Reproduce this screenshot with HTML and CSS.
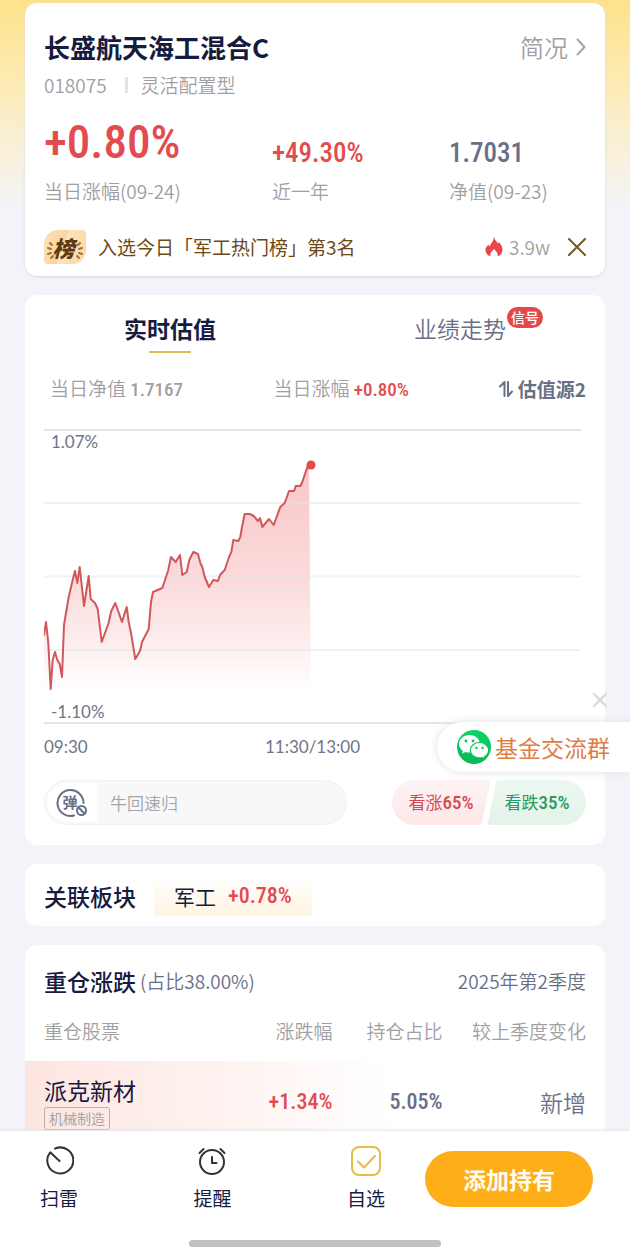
FILE: index.html
```html
<!DOCTYPE html>
<html lang="zh-CN">
<head>
<meta charset="utf-8">
<meta name="viewport" content="width=device-width, initial-scale=1">
<title>长盛航天海工混合C</title>
<link rel="stylesheet" href="styles.css">
</head>
<body>
<div class="app">
  <main class="content">
    <section class="card summary">
      <header class="summary-head">
        <h1 class="fund-name">长盛航天海工混合C</h1>
        <a class="profile-link" href="#profile">简况
          <svg class="chevron" viewBox="0 0 10 18" aria-hidden="true"><path d="M1.500 1.500 8.500 9l-7 7.500"/></svg>
        </a>
      </header>
      <p class="fund-meta"><span>018075</span><i class="divider"></i><span>灵活配置型</span></p>
      <dl class="stats">
        <div class="stat"><dd class="num num-xl up">+0.80%</dd><dt>当日涨幅(09-24)</dt></div>
        <div class="stat"><dd class="num num-lg up">+49.30%</dd><dt>近一年</dt></div>
        <div class="stat"><dd class="num num-lg slate">1.7031</dd><dt>净值(09-23)</dt></div>
      </dl>
      <div class="notice">
        <span class="rank-icon">
          <svg viewBox="0 0 42 34" aria-hidden="true">
            <path class="rank-ray" d="M6 13l2 2M4 18l3 1M4 24l3-1M7 28l2-2M36 13l-2 2M38 18l-3 1M38 24l-3-1M35 28l-2-2"/>
          </svg>
          <b>榜</b>
        </span>
        <a class="notice-text" href="#rank">入选今日「军工热门榜」第3名</a>
        <span class="heat">
          <svg class="flame" viewBox="0 0 18 20" aria-hidden="true"><path d="M9 0c1 3 2 4 4 6.500l1-1.500c2 2.500 3.500 5 3.500 8 0 3-2 5.500-5 6.500 1-3-1-5-3.500-7.500-2.500 2.500-4.500 4.500-3.500 7.500-3-1-5-3.500-5-6.500 0-2.500 1.500-4 3-5.500 0 1 .5 1.500 1 2C6 6.500 8.500 4 9 0z"/></svg>
          3.9w
        </span>
        <button class="icon-button" type="button" aria-label="关闭">
          <svg class="close-brown" viewBox="0 0 18 18"><path d="M1 1l16 16M17 1 1 17"/></svg>
        </button>
      </div>
    </section>

    <section class="card valuation">
      <nav class="tabs">
        <button class="tab active" type="button"><span class="tab-label">实时估值</span></button>
        <button class="tab" type="button"><span class="tab-label">业绩走势<span class="badge">信号</span></span></button>
      </nav>
      <div class="metrics">
        <span>当日净值 <b class="num num-sm">1.7167</b></span>
        <span>当日涨幅 <b class="num num-sm up">+0.80%</b></span>
        <button class="source" type="button">
          <svg viewBox="0 0 14 18" aria-hidden="true"><path d="M1 6.500 5.500 2v14M9 2v14l4-4.500"/></svg>估值源2
        </button>
      </div>
      <figure class="chart">
        <svg viewBox="0 0 537 295" role="img" aria-label="实时估值走势">
          <defs>
            <linearGradient id="area" x1="0" y1="36" x2="0" y2="260" gradientUnits="userSpaceOnUse">
              <stop offset="0" stop-color="#f9c6c8"/><stop offset=".5" stop-color="#fbdadb"/><stop offset=".8" stop-color="#fdeeee"/><stop offset="1" stop-color="#fff"/>
            </linearGradient>
          </defs>
          <path class="area" d="M0 206 2 193 4.300 214 6.700 260 8.700 231 11 223 13.300 231 15.700 235 18 248 20 196 24.700 168 28.700 151 31 142 33.300 154 35.700 138 40 177 44.700 147 46.700 170 51 174 53.700 180 57.700 213 64.300 195 67.300 182 71.300 174 78 193 82.700 178 84.700 193 87 204 91.300 230 96 222 98 213 104.700 200 107 173 109 163 118.300 159 124 142 127 128 131.700 133 136 126 138.300 146 142.700 143 145.300 131 149.300 123 154 125 156.300 134 158.300 138 160.700 148 165 158 169.300 151 174 152 176 146 180.700 141 185 128 187.300 123 189.300 111 194.300 112 196.300 108 198 98 200.700 85 206 85 209.700 87 214 92 216 89 218.300 98 225 90 229.700 96 236.300 78 240.700 74 245 62 250 62 251.700 57 256.300 57 258.300 53 264 36 265 36 267 260 0 260z"/>
          <path class="grid" d="M0 74h537M0 147.500h537M0 221h537"/>
          <path class="frame" d="M0 1h537M0 294h537"/>
          <path class="line" d="M0 206 2 193 4.300 214 6.700 260 8.700 231 11 223 13.300 231 15.700 235 18 248 20 196 24.700 168 28.700 151 31 142 33.300 154 35.700 138 40 177 44.700 147 46.700 170 51 174 53.700 180 57.700 213 64.300 195 67.300 182 71.300 174 78 193 82.700 178 84.700 193 87 204 91.300 230 96 222 98 213 104.700 200 107 173 109 163 118.300 159 124 142 127 128 131.700 133 136 126 138.300 146 142.700 143 145.300 131 149.300 123 154 125 156.300 134 158.300 138 160.700 148 165 158 169.300 151 174 152 176 146 180.700 141 185 128 187.300 123 189.300 111 194.300 112 196.300 108 198 98 200.700 85 206 85 209.700 87 214 92 216 89 218.300 98 225 90 229.700 96 236.300 78 240.700 74 245 62 250 62 251.700 57 256.300 57 258.300 53 264 36"/>
          <circle cx="267" cy="36" r="4.500" fill="#e9474b"/>
        </svg>
        <span class="axis y-max">1.07%</span>
        <span class="axis y-min">-1.10%</span>
      </figure>
      <div class="axis x-axis"><span>09:30</span><span>11:30/13:00</span><span></span></div>
      <div class="interact">
        <div class="danmaku">
          <button class="danmaku-toggle" type="button" aria-label="弹幕开关">
            <svg viewBox="0 0 32 30" aria-hidden="true">
              <path d="M27.500 15A13 13 0 1 0 18 27.500"/>
              <circle cx="25.500" cy="22.500" r="4.500"/><path d="M22.500 19.500l6 6"/>
            </svg>
            <b>弹</b>
          </button>
          <input class="danmaku-input" type="text" placeholder="牛回速归" aria-label="弹幕">
        </div>
        <div class="votes">
          <button class="vote vote-up" type="button">
            <svg class="vote-shape" viewBox="0 0 98 45" preserveAspectRatio="none" aria-hidden="true">
              <defs><linearGradient id="voteUp" x1="0" y1="0" x2="0" y2="1"><stop offset="0" stop-color="#fef3f3"/><stop offset="1" stop-color="#fde7e8"/></linearGradient></defs>
              <path fill="url(#voteUp)" d="M22.500 0H96q2.500 0 2 2.500L90 42q-.5 3-3 3H22.500a22.500 22.500 0 0 1 0-45z"/>
            </svg>
            <span>看涨<b class="num num-sm">65%</b></span>
          </button>
          <button class="vote vote-down" type="button">
            <svg class="vote-shape" viewBox="0 0 98 45" preserveAspectRatio="none" aria-hidden="true">
              <defs><linearGradient id="voteDown" x1="0" y1="0" x2="0" y2="1"><stop offset="0" stop-color="#edf7f1"/><stop offset="1" stop-color="#e3f3e8"/></linearGradient></defs>
              <path fill="url(#voteDown)" d="M75.500 45H2q-2.500 0-2-2.500L8 3q.5-3 3-3h64.500a22.500 22.500 0 0 1 0 45z"/>
            </svg>
            <span>看跌<b class="num num-sm">35%</b></span>
          </button>
        </div>
      </div>
    </section>

    <section class="card sector">
      <h2 class="section-title">关联板块</h2>
      <a class="sector-tag" href="#sector">军工 <b class="num num-md up">+0.78%</b></a>
    </section>

    <section class="card holdings">
      <header class="holdings-head">
        <h2 class="section-title">重仓涨跌</h2>
        <span class="ratio">(占比38.00%)</span>
        <span class="quarter">2025年第2季度</span>
      </header>
      <table class="holdings-table">
        <thead><tr><th class="col-name">重仓股票</th><th class="col-change">涨跌幅</th><th class="col-share">持仓占比</th><th class="col-diff">较上季度变化</th></tr></thead>
        <tbody><tr>
          <td><span class="stock">派克新材</span><span class="industry">机械制造</span></td>
          <td class="num num-md up">+1.34%</td>
          <td class="num num-md slate">5.05%</td>
          <td class="diff slate">新增</td>
        </tr></tbody>
      </table>
    </section>
  </main>

  <aside class="group">
    <button class="icon-button" type="button" aria-label="收起">
      <svg class="close-grey" viewBox="0 0 14 14"><path d="M1 1l12 12M13 1 1 13"/></svg>
    </button>
    <a class="group-link" href="#group">
      <svg class="wechat" viewBox="0 0 34 34" aria-hidden="true">
        <defs><linearGradient id="wx" x1="0" y1="0" x2="0" y2="1"><stop offset="0" stop-color="#0cd568"/><stop offset="1" stop-color="#08b855"/></linearGradient></defs>
        <circle cx="17" cy="17" r="17" fill="url(#wx)"/>
        <path fill="#fff" d="M12.500 5C6.500 5 2 9 2 14c0 2.800 1.500 5.200 3.800 6.800l-.8 2.700 3.300-1.600c1.300.4 2.700.6 4.200.6C18.500 22.500 23 18.800 23 14S18.500 5 12.500 5z"/>
        <path fill="#fff" stroke="#0ac660" stroke-width="1.200" d="M22.500 12.500c-5 0-9.200 3.300-9.200 7.700s4.200 7.700 9.200 7.700c1 0 2-.1 3-.4l2.800 1.500-.7-2.400c2.500-1.500 4-3.800 4-6.400 0-4.400-4-7.700-9.100-7.700z"/>
        <g fill="#0ac660"><circle cx="9" cy="11" r="1.400"/><circle cx="16" cy="11" r="1.400"/><circle cx="19.500" cy="18" r="1.200"/><circle cx="25.500" cy="18" r="1.200"/></g>
      </svg>
      基金交流群
    </a>
  </aside>

  <footer class="bottom-bar">
    <div class="actions">
      <nav class="tools">
        <button class="tool" type="button">
          <svg viewBox="0 0 30 30" aria-hidden="true"><path d="M11 2.600A13 13 0 1 1 6.200 6.300L15.500 15"/></svg>扫雷
        </button>
        <button class="tool" type="button">
          <svg viewBox="0 0 30 30" aria-hidden="true"><circle cx="15" cy="16" r="12"/><path d="M15 11v6h4.500M2.500 7l4-4M27.500 7l-4-4"/></svg>提醒
        </button>
        <button class="tool" type="button">
          <svg class="checked" viewBox="0 0 30 30" aria-hidden="true"><rect x="1" y="1" width="28" height="28" rx="7"/><path d="M7 15.500l6 6L24 10"/></svg>自选
        </button>
      </nav>
      <button class="add-button" type="button">添加持有</button>
    </div>
    <div class="home-indicator"></div>
  </footer>
</div>
</body>
</html>
```
FILE: styles.css
```css
* { box-sizing: border-box; }
body {
  margin: 0;
  font-family: "Noto Sans CJK SC", sans-serif;
  font-weight: 350;
  font-size: 19px;
  line-height: 28px;
  color: #9fa0a3;
}
h1, h2, p, dl, dd, figure { margin: 0; }
button {
  border: 0;
  padding: 0;
  background: none;
  font: inherit;
  color: inherit;
  cursor: pointer;
}
a { color: inherit; text-decoration: none; }
svg { display: block; fill: none; stroke-linecap: round; stroke-linejoin: round; }

.app {
  position: relative;
  display: flex;
  flex-direction: column;
  height: 100vh;
  overflow: hidden;
  background: linear-gradient(#fee28a 0, #fdecb8 90px, #f3f4fa 210px);
}
.content {
  flex: 1;
  min-height: 0;
  overflow: hidden;
  display: flex;
  flex-direction: column;
  gap: 19px;
  padding: 3px 25px 0;
}
.card {
  flex: none;
  padding: 0 19px;
  border-radius: 12px;
  background: #fff;
}

.num { font-family: "Roboto Condensed", "Roboto", sans-serif; font-weight: 500; }
.num-xl { font-size: 47px; line-height: 56px; }
.num-lg { font-size: 27px; line-height: 36px; }
.num-md { font-size: 22px; line-height: 28px; }
.num-sm { font-size: 19px; line-height: 28px; }
.up { color: #e24c4f; }
.slate { color: #686f86; }

/* Fund summary */
.summary { padding-top: 26px; padding-bottom: 12px; box-shadow: 0 1px 3px #d9dae2; }
.summary-head { display: flex; justify-content: space-between; align-items: center; }
.fund-name { font-size: 26px; line-height: 36px; font-weight: 700; color: #161b40; }
.profile-link { display: flex; align-items: center; gap: 8px; font-size: 24px; line-height: 36px; }
.chevron { width: 10px; height: 18px; stroke: #a3a4a7; stroke-width: 2; }
.fund-meta { display: flex; align-items: center; margin-top: 6px; }
.divider { width: 3px; height: 16px; margin: 0 13px 0 18px; background: #e3e3e3; }
.stats { display: grid; grid-template-columns: 228fr 177fr 137fr; margin-top: 15px; }
.stat { display: flex; flex-direction: column; justify-content: flex-end; gap: 7px; }
.stat .num-lg { margin-bottom: -1px; }
.notice { display: flex; align-items: center; margin-top: 25px; height: 34px; }
.rank-icon {
  display: grid;
  width: 42px;
  height: 34px;
  border-radius: 14px 4px 14px 4px;
  background: linear-gradient(110deg, #fde3bd, #fbd49f 45%, #fde2bc 46%, #fbd7a6);
}
.rank-icon > * { grid-area: 1 / 1; }
.rank-icon b { place-self: center; margin-right: 3px; font-size: 22px; line-height: 28px; font-weight: 900; font-style: italic; color: #5d3a12; }
.rank-ray { stroke: #a5712e; stroke-width: 2; }
.notice-text { flex: 1; margin-left: 12px; color: #6b4a17; font-weight: 400; }
.heat { display: flex; align-items: center; gap: 6px; margin-right: 18px; }
.flame { width: 18px; height: 20px; fill: #e9474b; }
.close-brown { width: 18px; height: 18px; stroke: #765526; stroke-width: 2; }

/* Real-time valuation */
.valuation { padding-top: 14px; padding-bottom: 20px; }
.tabs { display: grid; grid-template-columns: 1fr 1fr; margin: 0 -19px; }
.tab { display: flex; flex-direction: column; align-items: center; font-size: 23px; line-height: 38px; color: #686f86; }
.tab-label { position: relative; }
.tab.active { font-weight: 700; color: #161b40; }
.tab.active::after { content: ""; width: 42px; height: 2px; margin-top: 4px; background: #e0bd52; }
.badge {
  position: absolute;
  left: 100%;
  top: -2px;
  margin-left: 1px;
  padding: 0 4px;
  border-radius: 11px;
  background: #e5484b;
  color: #fff;
  font-size: 14px;
  line-height: 21px;
  font-weight: 500;
  white-space: nowrap;
}
.metrics { display: grid; grid-template-columns: 224fr 180fr 133fr; padding-left: 6px; margin-top: 21px; }
.source { display: flex; align-items: center; justify-content: flex-end; gap: 5px; font-weight: 700; color: #686f86; }
.source svg { width: 14px; height: 18px; stroke: #686f86; stroke-width: 2; }
.chart { position: relative; margin: 25px 5px 0 0; }
.chart svg { width: 100%; }
.area { fill: url(#area); }
.line { stroke: #d1575a; stroke-width: 2; }
.grid { stroke: #dfe5e6; stroke-opacity: .5; stroke-width: 2; }
.frame { stroke: #e0e6e8; stroke-width: 2; }
.axis { font-family: Lato, sans-serif; font-size: 17px; line-height: 24px; font-weight: 400; color: #6f7589; }
.y-max { position: absolute; left: 7px; top: 1px; }
.y-min { position: absolute; left: 7px; bottom: 0; }
.x-axis { display: grid; grid-template-columns: 1fr auto 1fr; margin: 11px 5px 0 0; }
.interact { display: flex; justify-content: space-between; gap: 45px; margin-top: 21px; }
.danmaku {
  flex: 1;
  min-width: 0;
  display: flex;
  height: 45px;
  padding: 2px;
  border: 1px solid #f2f2f2;
  border-radius: 23px;
  background: #f8f8f8;
}
.danmaku-toggle { display: grid; place-items: center; width: 50px; border-radius: 20px 0 0 20px; background: #fff; }
.danmaku-toggle > * { grid-area: 1 / 1; }
.danmaku-toggle svg { width: 32px; height: 30px; stroke: #686f86; stroke-width: 2; }
.danmaku-toggle b { margin: 0 4px 2px 0; font-size: 15px; line-height: 20px; font-weight: 700; color: #686f86; }
.danmaku-input { flex: 1; min-width: 0; border: 0; padding: 0 13px; background: none; font: inherit; font-size: 17px; color: #686f86; outline: 0; }
.danmaku-input::placeholder { color: #a3a4a7; opacity: 1; }
.votes { display: flex; flex: none; }
.vote { display: grid; align-items: center; width: 98px; height: 45px; font-size: 17px; font-weight: 400; }
.vote > * { grid-area: 1 / 1; }
.vote-shape { width: 100%; height: 100%; }
.vote-up { color: #d5494d; }
.vote-down { margin-left: -2px; color: #2a9a62; }

/* Related sector */
.section-title { font-size: 23px; line-height: 36px; font-weight: 500; color: #161b40; }
.sector { display: flex; align-items: center; gap: 18px; padding-top: 12px; padding-bottom: 10px; }
.sector-tag {
  display: flex;
  align-items: center;
  gap: 12px;
  padding: 0 20px;
  border-radius: 4px;
  background: linear-gradient(#fff, #fef4e1);
  font-size: 21px;
  line-height: 40px;
  font-weight: 400;
  color: #161b40;
}

/* Top holdings */
.holdings { padding: 18px 0 0; }
.holdings-head { display: flex; align-items: center; padding: 0 19px; color: #686f86; }
.ratio { margin-left: 4px; }
.quarter { margin-left: auto; }
.holdings-table { width: 100%; margin-top: 18px; border-collapse: collapse; table-layout: fixed; text-align: right; }
.holdings-table th { padding: 0 0 16px; font-weight: 350; }
.holdings-table th:first-child, .holdings-table td:first-child { padding-left: 19px; text-align: left; }
.holdings-table th:last-child, .holdings-table td:last-child { padding-right: 19px; }
.col-name { width: 33%; }
.col-change { width: 20%; }
.col-share { width: 19%; }
.col-diff { width: 28%; }
.holdings-table tbody tr { background: linear-gradient(90deg, #fde5e0, #fff 64%); }
.holdings-table td { padding: 13px 0 15px; }
.stock { display: block; font-size: 23px; line-height: 32px; font-weight: 400; color: #161b40; }
.industry {
  display: block;
  width: fit-content;
  margin-top: 1px;
  padding: 0 4px;
  border: 1px solid #b5b0b0;
  border-radius: 3px;
  font-size: 14px;
  line-height: 21px;
}
.diff { font-size: 23px; }

/* Floating group entry */
.group { position: absolute; right: 0; top: 693px; display: flex; flex-direction: column; align-items: flex-end; gap: 15px; }
.group .icon-button { margin-right: 23px; }
.close-grey { width: 14px; height: 14px; stroke: #d6d6d8; stroke-width: 2; }
.group-link {
  display: flex;
  align-items: center;
  gap: 4px;
  padding: 0 20px;
  border-radius: 25px 0 0 25px;
  background: #fff;
  box-shadow: 0 0 8px #dfe0e4;
  font-size: 23px;
  line-height: 50px;
  font-weight: 400;
  color: #e07c45;
}
.wechat { width: 34px; height: 34px; }

/* Bottom action bar */
.bottom-bar { flex: none; padding: 15px 0 12px; background: #fff; box-shadow: 0 -1px 3px #e3e3e8; }
.actions { display: flex; align-items: center; gap: 40px; height: 66px; padding: 0 37px 0 40px; }
.tools { flex: 1; display: flex; justify-content: space-between; }
.tool { display: flex; flex-direction: column; align-items: center; gap: 8px; font-weight: 400; color: #161b40; }
.tool svg { width: 30px; height: 30px; stroke: #333; stroke-width: 2; }
.tool .checked { stroke: #e6bc44; }
.add-button { width: 168px; height: 56px; border-radius: 28px; background: #fdae19; color: #fffdf0; font-size: 23px; font-weight: 700; }
.home-indicator { width: 252px; height: 7px; margin: 28px auto 0; border-radius: 4px; background: #c1c1c1; }
```
